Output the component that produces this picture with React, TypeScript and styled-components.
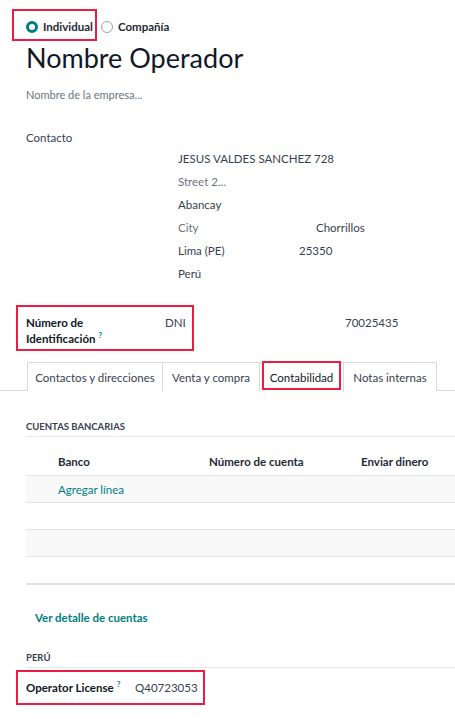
import React from "react";
import styled, { createGlobalStyle, css } from "styled-components";

const Global = createGlobalStyle`
  html, body { margin: 0; padding: 0; background: #ffffff; }
  body {
    font-family: Lato, "Noto Sans", sans-serif;
    font-size: 12px;
    color: #374151;
    -webkit-font-smoothing: antialiased;
  }
  * { box-sizing: border-box; }
`;

const RED = "#ee1b45";
const TEAL = "#017e84";
const FS = 11.5;

const Page = styled.div`
  width: 455px;
  min-height: 719px;
  padding: 0 0 0 26px;
  overflow: hidden;
`;

type Inset = { $t: number; $r: number; $b: number; $l: number };

const Highlight = styled.div<Inset>`
  position: relative;
  &::after {
    content: "";
    position: absolute;
    top: ${(p) => -p.$t}px;
    right: ${(p) => -p.$r}px;
    bottom: ${(p) => -p.$b}px;
    left: ${(p) => -p.$l}px;
    border: 2.5px solid ${RED};
    pointer-events: none;
  }
`;

const RadioRow = styled.div`
  display: flex;
  align-items: center;
  gap: 8px;
  padding-top: 20px;
  height: 34px;
`;

const RadioOption = styled.label`
  display: flex;
  align-items: center;
  gap: 5px;
  font-weight: 700;
  color: #1f2937;
  font-size: ${FS}px;
  line-height: 14px;
`;

const RadioDot = styled.span<{ $on?: boolean }>`
  width: 12px;
  height: 12px;
  border-radius: 50%;
  flex: none;
  ${(p) =>
    p.$on
      ? css`
          border: 3.5px solid ${TEAL};
          background: #ffffff;
        `
      : css`
          border: 1px solid #9ca3af;
          background: #ffffff;
        `}
`;

const Title = styled.h1`
  margin: 7px 0 0 0;
  font-weight: 400;
  font-size: 27px;
  line-height: 34px;
  color: #111827;
`;

const Placeholder = styled.div`
  margin-top: 12px;
  font-size: 11px;
  line-height: 16px;
  color: #6b7280;
`;

const ContactBlock = styled.div`
  display: grid;
  grid-template-columns: 152px 1fr;
  margin-top: 27px;
`;

const FieldLabel = styled.div<{ $bold?: boolean }>`
  font-size: ${FS}px;
  line-height: 16px;
  color: ${(p) => (p.$bold ? "#111827" : "#374151")};
  font-weight: ${(p) => (p.$bold ? 700 : 400)};
  white-space: nowrap;
`;

const Address = styled.div`
  grid-column: 2;
  margin-top: 1px;
  display: flex;
  flex-direction: column;
`;

const AddrLine = styled.div<{ $split?: number }>`
  height: 23px;
  display: grid;
  grid-template-columns: ${(p) => (p.$split ? `${p.$split}px 1fr` : "1fr")};
  align-items: center;
  font-size: ${FS}px;
  color: #374151;
`;

const Muted = styled.span`
  color: #6b7280;
`;

const IdRow = styled.div`
  display: grid;
  grid-template-columns: 158px 1fr;
  margin-top: 30px;
  align-items: start;
`;

const IdInner = styled.div`
  display: grid;
  grid-template-columns: 139px 1fr;
`;

const Help = styled.span`
  position: relative;
  top: -5px;
  color: ${TEAL};
  font-size: 8px;
  line-height: 0;
  margin-left: 3px;
  font-weight: 700;
`;

const Value = styled.div<{ $pad?: number }>`
  font-size: ${FS}px;
  line-height: 16px;
  color: #374151;
  padding-left: ${(p) => p.$pad ?? 0}px;
  white-space: nowrap;
`;

const TabBar = styled.div`
  display: flex;
  margin: 15px 0 0 -26px;
  padding-left: 27px;
  border-bottom: 1px solid #d8dadd;
  height: 29px;
`;

const Tab = styled.div<{ $active?: boolean; $w: number }>`
  position: relative;
  display: flex;
  align-items: center;
  justify-content: center;
  width: ${(p) => p.$w}px;
  height: 29px;
  font-size: ${FS}px;
  color: #374151;
  border: 1px solid #d8dadd;
  border-left-width: 0;
  border-bottom: none;
  background: #ffffff;
  white-space: nowrap;
  &:first-child { border-left-width: 1px; }
  ${(p) =>
    p.$active &&
    css`
      color: #111827;
      height: 30px;
    `}
`;

const ActiveMark = styled.div`
  position: absolute;
  inset: -2px 2px 2px 2px;
  border: 2.5px solid ${RED};
  pointer-events: none;
`;

const SectionTitle = styled.div<{ $mt: number }>`
  margin-top: ${(p) => p.$mt}px;
  font-size: 9.5px;
  font-weight: 700;
  line-height: 12px;
  color: #374151;
  text-transform: uppercase;
  padding-bottom: 3px;
  border-bottom: 1px solid #e5e7eb;
`;

const Table = styled.div`
  margin-top: 11px;
  border-bottom: 2px solid #dee2e6;
`;

const TRow = styled.div<{ $shade?: boolean; $head?: boolean }>`
  display: grid;
  grid-template-columns: 151px 152px 1fr;
  align-items: center;
  height: 27px;
  padding-left: 32px;
  background: ${(p) => (p.$shade ? "#f9f9f9" : "#ffffff")};
  border-top: ${(p) => (p.$head ? "none" : "1px solid #e2e3e5")};
  font-size: ${FS}px;
  font-weight: ${(p) => (p.$head ? 700 : 400)};
  color: ${(p) => (p.$head ? "#1f2937" : "#374151")};
  white-space: nowrap;
`;

const LinkText = styled.span<{ $bold?: boolean }>`
  color: ${TEAL};
  font-weight: ${(p) => (p.$bold ? 700 : 400)};
  font-size: ${FS}px;
`;

const DetailLink = styled.div`
  margin-top: 25px;
  padding-left: 9px;
  line-height: 16px;
`;

const LicenseRow = styled.div`
  display: flex;
  align-items: center;
  margin-top: 12px;
  height: 16px;
`;

const LicenseInner = styled.div`
  display: grid;
  grid-template-columns: 109px auto;
  align-items: center;
  height: 16px;
`;

export default function App() {
  return (
    <>
      <Global />
      <Page>
        <RadioRow>
          <Highlight $t={11} $r={4} $b={7} $l={14}>
            <RadioOption>
              <RadioDot $on />
              Individual
            </RadioOption>
          </Highlight>
          <RadioOption>
            <RadioDot />
            Compañía
          </RadioOption>
        </RadioRow>

        <Title>Nombre Operador</Title>
        <Placeholder>Nombre de la empresa...</Placeholder>

        <ContactBlock>
          <FieldLabel>Contacto</FieldLabel>
          <div />
          <Address>
            <AddrLine>JESUS VALDES SANCHEZ 728</AddrLine>
            <AddrLine>
              <Muted>Street 2...</Muted>
            </AddrLine>
            <AddrLine>Abancay</AddrLine>
            <AddrLine $split={138}>
              <Muted>City</Muted>
              <span>Chorrillos</span>
            </AddrLine>
            <AddrLine $split={121}>
              <span>Lima (PE)</span>
              <span>25350</span>
            </AddrLine>
            <AddrLine>Perú</AddrLine>
          </Address>
        </ContactBlock>

        <IdRow>
          <Highlight $t={10} $r={10} $b={4} $l={10}>
            <IdInner>
              <FieldLabel $bold>
                Número de
                <br />
                Identificación<Help>?</Help>
              </FieldLabel>
              <Value>DNI</Value>
            </IdInner>
          </Highlight>
          <Value $pad={161}>70025435</Value>
        </IdRow>

        <TabBar>
          <Tab $w={136}>Contactos y direcciones</Tab>
          <Tab $w={97}>Venta y compra</Tab>
          <Tab $active $w={84}>
            Contabilidad
            <ActiveMark />
          </Tab>
          <Tab $w={93}>Notas internas</Tab>
        </TabBar>

        <SectionTitle $mt={30}>Cuentas bancarias</SectionTitle>

        <Table>
          <TRow $head>
            <span>Banco</span>
            <span>Número de cuenta</span>
            <span>Enviar dinero</span>
          </TRow>
          <TRow $shade>
            <LinkText>Agregar línea</LinkText>
          </TRow>
          <TRow />
          <TRow $shade />
          <TRow />
        </Table>

        <DetailLink>
          <LinkText $bold>Ver detalle de cuentas</LinkText>
        </DetailLink>

        <SectionTitle $mt={26}>Perú</SectionTitle>

        <LicenseRow>
          <Highlight $t={10} $r={7} $b={9} $l={10}>
            <LicenseInner>
              <FieldLabel $bold>
                Operator License<Help>?</Help>
              </FieldLabel>
              <Value>Q40723053</Value>
            </LicenseInner>
          </Highlight>
        </LicenseRow>
      </Page>
    </>
  );
}
